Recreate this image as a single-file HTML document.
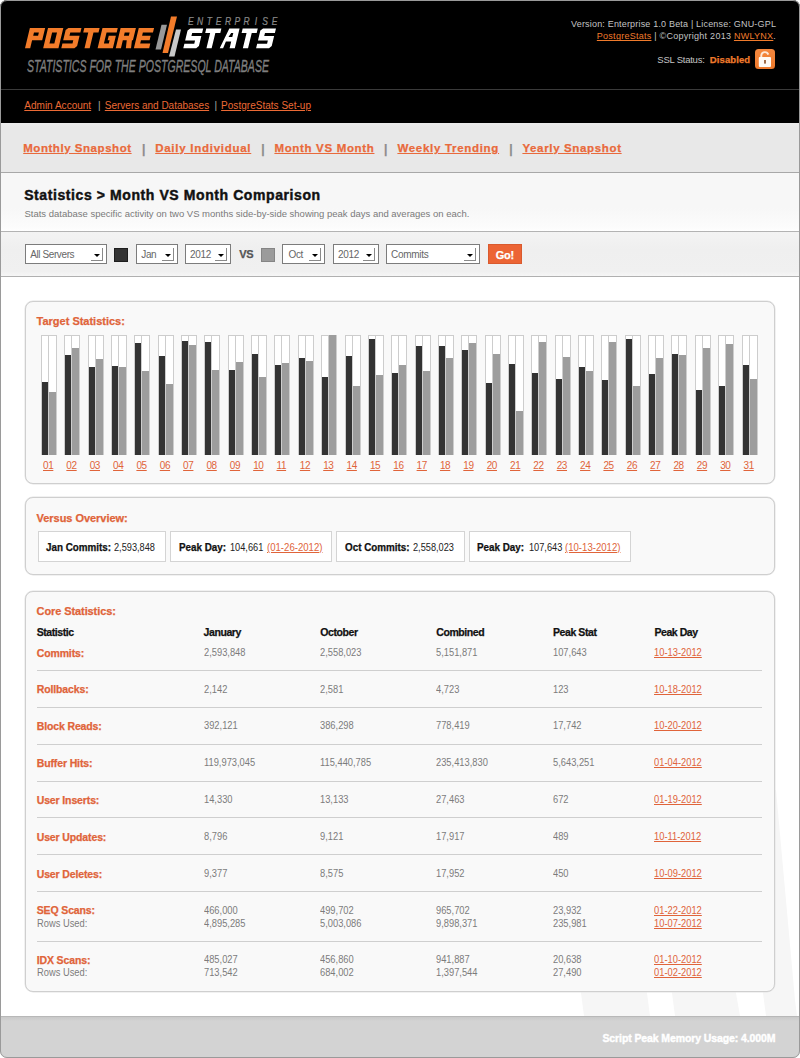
<!DOCTYPE html>
<html><head><meta charset="utf-8">
<style>
html,body{margin:0;padding:0;background:#fff;}
body{width:800px;height:1058px;position:relative;overflow:hidden;font-family:"Liberation Sans",sans-serif;}
#page{position:absolute;left:0;top:0;width:800px;height:1058px;border-radius:7px;overflow:hidden;background:#fff;}
#pb{position:absolute;left:0;top:0;width:800px;height:1058px;box-sizing:border-box;border:1px solid #9a9a9a;border-radius:7px;}
#hdr{position:absolute;left:0;top:0;width:800px;height:89px;background:#000;}
#hline{position:absolute;left:0;top:89px;width:800px;height:1px;background:#3a3a3a;}
#nav{position:absolute;left:0;top:90px;width:800px;height:33px;background:#000;}
#subnav{position:absolute;left:0;top:123px;width:800px;height:49px;background:linear-gradient(#ececec,#e8e8e8 4px);border-bottom:1px solid #a8a8a8;}
#title{position:absolute;left:0;top:173px;width:800px;height:58px;background:linear-gradient(#f7f7f7 60%,#fcfcfc 95%,#fff);border-bottom:1px solid #b3b3b3;}
#filter{position:absolute;left:0;top:232px;width:800px;height:44px;background:linear-gradient(#f3f3f3,#efefef 40%,#f0f0f0 90%,#f6f6f6);border-bottom:1px solid #b0b0b0;}
#footer{position:absolute;left:0;top:1016px;width:800px;height:42px;background:linear-gradient(#c9c9c9,#d3d3d3 4px);border-top:1px solid #b8b8b8;}
a{text-decoration:underline;}
[style*="font-weight:bold"]{-webkit-text-stroke:0.25px currentColor;}
.sel{position:absolute;top:244px;height:20px;box-sizing:border-box;border:1px solid #7c7c7c;background:#fff;}
.sel i{position:absolute;top:3px;right:3px;width:11px;height:12px;border-right:1px solid #8a8a8a;border-bottom:1px solid #8a8a8a;}
.sel i:after{content:"";position:absolute;left:3px;top:6px;border-left:3px solid transparent;border-right:3px solid transparent;border-top:3px solid #000;}
.sq{position:absolute;top:248px;width:14px;height:14px;box-sizing:border-box;}
.panel{position:absolute;left:25px;width:750px;box-sizing:border-box;border:1px solid #cfcfcf;border-radius:8px;background:#f9f9f9;box-shadow:0 0 0 0.5px #e4e4e4;}
.fr{position:absolute;top:335px;height:120px;box-sizing:border-box;border:1px solid #cdcdcd;background:#fff;}
.fd{position:absolute;bottom:603px;width:6px;background:#333;}
.fg{position:absolute;bottom:603px;width:7px;background:#9d9d9d;}
.vbox{position:absolute;top:531px;height:31px;box-sizing:border-box;border:1px solid #d4d4d4;background:#fff;}
.sep{position:absolute;left:37px;width:725px;height:1px;background:#cfcfcf;}
</style></head><body>
<div id="page">
<div id="hdr"></div>
<div id="hline"></div>
<div id="nav"></div>
<div id="subnav"></div>
<div id="title"></div>
<div id="filter"></div>

<!-- logo -->
<svg style="position:absolute;left:0;top:0" width="300" height="88">
<path transform="translate(25.00,48.2) skewX(-13.5)" fill-rule="evenodd" fill="#f37c2a" d="M0,0V-20.3H15.3V-7.8500000000000005H5.2V0Z M5.2,-15.700000000000001V-12.45H10.100000000000001V-15.700000000000001Z"/>
<path transform="translate(43.15,48.2) skewX(-13.5)" fill-rule="evenodd" fill="#f37c2a" d="M0,0V-20.3H15.3V0Z M5.2,-15.700000000000001V-4.6H10.100000000000001V-15.700000000000001Z"/>
<path transform="translate(61.30,48.2) skewX(-13.5)" fill-rule="evenodd" fill="#f37c2a" d="M2.2,-20.3H15.3V-15.700000000000001H5.2V-12.45H15.3V-2.2L13.100000000000001,0H0V-4.6H10.100000000000001V-7.8500000000000005H0V-18.1Z"/>
<path transform="translate(79.45,48.2) skewX(-13.5)" fill-rule="evenodd" fill="#f37c2a" d="M0,-20.3H15.3V-15.700000000000001H10.25V0H5.050000000000001V-15.700000000000001H0Z"/>
<path transform="translate(97.60,48.2) skewX(-13.5)" fill-rule="evenodd" fill="#f37c2a" d="M0,0V-20.3H15.3V-15.700000000000001H5.2V-4.6H10.100000000000001V-7.8500000000000005H8.15V-12.45H15.3V0Z"/>
<path transform="translate(115.75,48.2) skewX(-13.5)" fill-rule="evenodd" fill="#f37c2a" d="M0,0V-20.3H15.3V-7.8500000000000005H14.3L15.3,0H10.100000000000001L9.100000000000001,-7.8500000000000005H5.2V0Z M5.2,-15.700000000000001V-12.45H10.100000000000001V-15.700000000000001Z"/>
<path transform="translate(133.90,48.2) skewX(-13.5)" fill-rule="evenodd" fill="#f37c2a" d="M0,0V-20.3H15.3V-15.700000000000001H5.2V-12.45H13.8V-7.8500000000000005H5.2V-4.6H15.3V0Z"/>
<path transform="translate(183.30,48.3) skewX(-13.5)" fill-rule="evenodd" fill="#ffffff" d="M2.2,-19.9H15.1V-15.399999999999999H5.2V-12.2H15.1V-2.2L12.899999999999999,0H0V-4.5H9.899999999999999V-7.699999999999999H0V-17.7Z"/>
<path transform="translate(201.50,48.3) skewX(-13.5)" fill-rule="evenodd" fill="#ffffff" d="M0,-19.9H15.1V-15.399999999999999H10.15V0H4.949999999999999V-15.399999999999999H0Z"/>
<path transform="translate(219.70,48.3) skewX(-13.5)" fill-rule="evenodd" fill="#ffffff" d="M0,0L4.832,-19.9H15.1V0H9.899999999999999V-6.699999999999999H4.6000000000000005L3.4000000000000004,0Z M6.1000000000000005,-11.2H9.899999999999999V-15.399999999999999H7.800000000000001Z"/>
<path transform="translate(237.90,48.3) skewX(-13.5)" fill-rule="evenodd" fill="#ffffff" d="M0,-19.9H15.1V-15.399999999999999H10.15V0H4.949999999999999V-15.399999999999999H0Z"/>
<path transform="translate(256.10,48.3) skewX(-13.5)" fill-rule="evenodd" fill="#ffffff" d="M2.2,-19.9H15.1V-15.399999999999999H5.2V-12.2H15.1V-2.2L12.899999999999999,0H0V-4.5H9.899999999999999V-7.699999999999999H0V-17.7Z"/>
<polygon points="161.5,24.75 167,24.75 161,49.5 155.5,49.5" fill="#999999"/>
<polygon points="171,16.5 177,16.5 168,53 162.5,53" fill="#f37c2a"/>
<polygon points="176,29.5 181,29.5 174.5,56.5 169,56.5" fill="#c9c9c9"/>
<text transform="scale(0.72,1)" text-anchor="middle" x="265.00 277.92 290.83 303.75 316.67 329.58 342.50 355.42 368.33 381.25" y="25.1" font-family="Liberation Sans" font-style="italic" font-size="11.8" fill="#8a8a8a" stroke="#8a8a8a" stroke-width="0.25">ENTERPRISE</text>
<text x="27" y="72" font-family="Liberation Sans" font-style="italic" font-size="16.5" fill="#7f7f7f" stroke="#7f7f7f" stroke-width="0.35" textLength="242" lengthAdjust="spacingAndGlyphs">STATISTICS FOR THE POSTGRESQL DATABASE</text>
</svg>

<svg style="position:absolute;left:755px;top:49px" width="20" height="20">
<defs><linearGradient id="lg" x1="0" y1="0" x2="0" y2="1"><stop offset="0" stop-color="#f4873e"/><stop offset="1" stop-color="#ee7a2c"/></linearGradient></defs>
<rect x="0" y="0" width="20" height="20" rx="3.5" fill="url(#lg)"/>
<path d="M6.3 8.2 V6.3 A3.6 3.6 0 0 1 13.3 5.6" stroke="#fde7d6" stroke-width="1.9" fill="none"/>
<rect x="3.8" y="8" width="12.2" height="10" rx="1" fill="#fffaf5"/>
<rect x="9.2" y="11" width="1.6" height="3.6" fill="#8a4a20"/>
</svg>

<div id="t1" style="position:absolute;right:23.90px;text-align:right;top:13.58px;font-size:9px;line-height:20px;color:#c4c4c4;font-weight:normal;letter-spacing:0.184px;white-space:nowrap;">Version: Enterprise 1.0 Beta | License: GNU-GPL</div>
<div id="t2" style="position:absolute;right:23.90px;text-align:right;top:26.38px;font-size:9px;line-height:20px;color:#c4c4c4;font-weight:normal;letter-spacing:0.260px;white-space:nowrap;"><a style="color:#f07b2c">PostgreStats</a> | ©Copyright 2013 <a style="color:#f07b2c">NWLYNX</a>.</div>
<div id="t3" style="position:absolute;left:657.30px;top:49.91px;font-size:9.5px;line-height:20px;color:#c4c4c4;font-weight:normal;letter-spacing:-0.228px;white-space:nowrap;">SSL Status:</div>
<div id="t4" style="position:absolute;right:49.80px;text-align:right;top:49.91px;font-size:9.5px;line-height:20px;color:#f07b2c;font-weight:bold;letter-spacing:0.100px;white-space:nowrap;">Disabled</div>
<div id="t5" style="position:absolute;left:24.30px;top:95.73px;font-size:10px;line-height:20px;color:#777;font-weight:normal;letter-spacing:0.011px;white-space:nowrap;"><a style="color:#ec6a35">Admin Account</a></div>
<div id="t6" style="position:absolute;left:98.00px;top:95.73px;font-size:10px;line-height:20px;color:#aaa;font-weight:normal;white-space:nowrap;">|</div>
<div id="t7" style="position:absolute;left:104.80px;top:95.73px;font-size:10px;line-height:20px;color:#777;font-weight:normal;letter-spacing:-0.008px;white-space:nowrap;"><a style="color:#ec6a35">Servers and Databases</a></div>
<div id="t8" style="position:absolute;left:214.50px;top:95.73px;font-size:10px;line-height:20px;color:#aaa;font-weight:normal;white-space:nowrap;">|</div>
<div id="t9" style="position:absolute;left:221.10px;top:95.73px;font-size:10px;line-height:20px;color:#777;font-weight:normal;letter-spacing:0.023px;white-space:nowrap;"><a style="color:#ec6a35">PostgreStats Set-up</a></div>
<div id="t10" style="position:absolute;left:23.20px;top:138.02px;font-size:11.5px;line-height:20px;color:#777;font-weight:bold;letter-spacing:0.547px;white-space:nowrap;"><a style="color:#e96a3c">Monthly Snapshot</a></div>
<div id="t11" style="position:absolute;left:155.20px;top:138.02px;font-size:11.5px;line-height:20px;color:#777;font-weight:bold;letter-spacing:0.732px;white-space:nowrap;"><a style="color:#e96a3c">Daily Individual</a></div>
<div id="t12" style="position:absolute;left:274.40px;top:138.02px;font-size:11.5px;line-height:20px;color:#777;font-weight:bold;letter-spacing:0.670px;white-space:nowrap;"><a style="color:#e96a3c">Month VS Month</a></div>
<div id="t13" style="position:absolute;left:397.40px;top:138.02px;font-size:11.5px;line-height:20px;color:#777;font-weight:bold;letter-spacing:0.700px;white-space:nowrap;"><a style="color:#e96a3c">Weekly Trending</a></div>
<div id="t14" style="position:absolute;left:522.40px;top:138.02px;font-size:11.5px;line-height:20px;color:#777;font-weight:bold;letter-spacing:0.651px;white-space:nowrap;"><a style="color:#e96a3c">Yearly Snapshot</a></div>
<div id="t15" style="position:absolute;left:142.10px;top:139.04px;font-size:12px;line-height:20px;color:#8c8c8c;font-weight:bold;white-space:nowrap;">|</div>
<div id="t16" style="position:absolute;left:261.30px;top:139.04px;font-size:12px;line-height:20px;color:#8c8c8c;font-weight:bold;white-space:nowrap;">|</div>
<div id="t17" style="position:absolute;left:384.10px;top:139.04px;font-size:12px;line-height:20px;color:#8c8c8c;font-weight:bold;white-space:nowrap;">|</div>
<div id="t18" style="position:absolute;left:509.30px;top:139.04px;font-size:12px;line-height:20px;color:#8c8c8c;font-weight:bold;white-space:nowrap;">|</div>
<div id="t19" style="position:absolute;left:24.20px;top:185.05px;font-size:14px;line-height:20px;color:#111;font-weight:bold;letter-spacing:0.587px;white-space:nowrap;-webkit-text-stroke:0.45px #111;">Statistics &gt; Month VS Month Comparison</div>
<div id="t20" style="position:absolute;left:24.50px;top:204.01px;font-size:9.5px;line-height:20px;color:#7a7a7a;font-weight:normal;letter-spacing:-0.008px;white-space:nowrap;">Stats database specific activity on two VS months side-by-side showing peak days and averages on each.</div>
<div class="sel" style="left:25px;width:82px"><i></i></div><div id="t21" style="position:absolute;left:30.20px;top:245.14px;font-size:10px;line-height:20px;color:#666;font-weight:normal;letter-spacing:-0.396px;white-space:nowrap;">All Servers</div>
<div class="sq" style="left:114px;background:#333;border:1px solid #1e1e1e"></div>
<div class="sel" style="left:136px;width:42px"><i></i></div><div id="t22" style="position:absolute;left:141.30px;top:245.14px;font-size:10px;line-height:20px;color:#666;font-weight:normal;letter-spacing:-0.396px;white-space:nowrap;">Jan</div>
<div class="sel" style="left:185px;width:46px"><i></i></div><div id="t23" style="position:absolute;left:190.00px;top:245.14px;font-size:10px;line-height:20px;color:#666;font-weight:normal;letter-spacing:-0.300px;white-space:nowrap;">2012</div>
<div id="t24" style="position:absolute;left:239.20px;top:244.39px;font-size:11px;line-height:20px;color:#555;font-weight:bold;letter-spacing:-0.200px;white-space:nowrap;">VS</div>
<div class="sq" style="left:261px;background:#9b9b9b;border:1px solid #858585"></div>
<div class="sel" style="left:282px;width:43px"><i></i></div><div id="t25" style="position:absolute;left:288.50px;top:245.14px;font-size:10px;line-height:20px;color:#666;font-weight:normal;letter-spacing:-0.396px;white-space:nowrap;">Oct</div>
<div class="sel" style="left:333px;width:46px"><i></i></div><div id="t26" style="position:absolute;left:338.00px;top:245.14px;font-size:10px;line-height:20px;color:#666;font-weight:normal;letter-spacing:-0.300px;white-space:nowrap;">2012</div>
<div class="sel" style="left:386px;width:94px"><i></i></div><div id="t27" style="position:absolute;left:391.00px;top:245.14px;font-size:10px;line-height:20px;color:#666;font-weight:normal;letter-spacing:-0.300px;white-space:nowrap;">Commits</div>
<div style="position:absolute;left:488px;top:244px;width:34px;height:20px;box-sizing:border-box;border:1px solid #d95a2e;background:#ec6434"></div>
<div id="t28" style="position:absolute;left:495.80px;top:245.19px;font-size:11px;line-height:20px;color:#fff;font-weight:bold;letter-spacing:-0.300px;white-space:nowrap;">Go!</div>
<svg style="position:absolute;left:0;top:0" width="800" height="1058">
<polygon points="578,970 644,970 650,1016 584,1016" fill="#f6f6f6"/>
<polygon points="669,970 732,970 740,1016 675,1016" fill="#f6f6f6"/>
<polygon points="735,780 776,790 795,1000 797,1016 766,1016" fill="#f6f6f6"/>
</svg>
<div class="panel" style="top:301px;height:183px"></div>
<div id="t29" style="position:absolute;left:36.60px;top:310.69px;font-size:11px;line-height:20px;color:#e0643a;font-weight:bold;letter-spacing:-0.010px;white-space:nowrap;">Target Statistics:</div>
<div class="fr" style="left:41px;width:8px"></div><div class="fr" style="left:48px;width:9px"></div><div class="fd" style="left:42px;height:73px"></div><div class="fg" style="left:49px;height:63px"></div>
<div id="t30" style="position:absolute;left:43.00px;top:455.54px;font-size:10px;line-height:20px;color:#777;font-weight:normal;letter-spacing:-0.400px;white-space:nowrap;"><a style="color:#e0643a">01</a></div>
<div class="fr" style="left:64px;width:8px"></div><div class="fr" style="left:71px;width:9px"></div><div class="fd" style="left:65px;height:100px"></div><div class="fg" style="left:72px;height:107px"></div>
<div id="t31" style="position:absolute;left:66.35px;top:455.54px;font-size:10px;line-height:20px;color:#777;font-weight:normal;letter-spacing:-0.400px;white-space:nowrap;"><a style="color:#e0643a">02</a></div>
<div class="fr" style="left:88px;width:8px"></div><div class="fr" style="left:95px;width:9px"></div><div class="fd" style="left:89px;height:88px"></div><div class="fg" style="left:96px;height:96px"></div>
<div id="t32" style="position:absolute;left:89.70px;top:455.54px;font-size:10px;line-height:20px;color:#777;font-weight:normal;letter-spacing:-0.400px;white-space:nowrap;"><a style="color:#e0643a">03</a></div>
<div class="fr" style="left:111px;width:8px"></div><div class="fr" style="left:118px;width:9px"></div><div class="fd" style="left:112px;height:89px"></div><div class="fg" style="left:119px;height:88px"></div>
<div id="t33" style="position:absolute;left:113.05px;top:455.54px;font-size:10px;line-height:20px;color:#777;font-weight:normal;letter-spacing:-0.400px;white-space:nowrap;"><a style="color:#e0643a">04</a></div>
<div class="fr" style="left:134px;width:8px"></div><div class="fr" style="left:141px;width:9px"></div><div class="fd" style="left:135px;height:112px"></div><div class="fg" style="left:142px;height:84px"></div>
<div id="t34" style="position:absolute;left:136.40px;top:455.54px;font-size:10px;line-height:20px;color:#777;font-weight:normal;letter-spacing:-0.400px;white-space:nowrap;"><a style="color:#e0643a">05</a></div>
<div class="fr" style="left:158px;width:8px"></div><div class="fr" style="left:165px;width:9px"></div><div class="fd" style="left:159px;height:99px"></div><div class="fg" style="left:166px;height:71px"></div>
<div id="t35" style="position:absolute;left:159.75px;top:455.54px;font-size:10px;line-height:20px;color:#777;font-weight:normal;letter-spacing:-0.400px;white-space:nowrap;"><a style="color:#e0643a">06</a></div>
<div class="fr" style="left:181px;width:8px"></div><div class="fr" style="left:188px;width:9px"></div><div class="fd" style="left:182px;height:114px"></div><div class="fg" style="left:189px;height:110px"></div>
<div id="t36" style="position:absolute;left:183.10px;top:455.54px;font-size:10px;line-height:20px;color:#777;font-weight:normal;letter-spacing:-0.400px;white-space:nowrap;"><a style="color:#e0643a">07</a></div>
<div class="fr" style="left:204px;width:8px"></div><div class="fr" style="left:211px;width:9px"></div><div class="fd" style="left:205px;height:113px"></div><div class="fg" style="left:212px;height:85px"></div>
<div id="t37" style="position:absolute;left:206.45px;top:455.54px;font-size:10px;line-height:20px;color:#777;font-weight:normal;letter-spacing:-0.400px;white-space:nowrap;"><a style="color:#e0643a">08</a></div>
<div class="fr" style="left:228px;width:8px"></div><div class="fr" style="left:235px;width:9px"></div><div class="fd" style="left:229px;height:85px"></div><div class="fg" style="left:236px;height:93px"></div>
<div id="t38" style="position:absolute;left:229.80px;top:455.54px;font-size:10px;line-height:20px;color:#777;font-weight:normal;letter-spacing:-0.400px;white-space:nowrap;"><a style="color:#e0643a">09</a></div>
<div class="fr" style="left:251px;width:8px"></div><div class="fr" style="left:258px;width:9px"></div><div class="fd" style="left:252px;height:101px"></div><div class="fg" style="left:259px;height:78px"></div>
<div id="t39" style="position:absolute;left:253.15px;top:455.54px;font-size:10px;line-height:20px;color:#777;font-weight:normal;letter-spacing:-0.400px;white-space:nowrap;"><a style="color:#e0643a">10</a></div>
<div class="fr" style="left:274px;width:8px"></div><div class="fr" style="left:281px;width:9px"></div><div class="fd" style="left:275px;height:90px"></div><div class="fg" style="left:282px;height:92px"></div>
<div id="t40" style="position:absolute;left:276.50px;top:455.54px;font-size:10px;line-height:20px;color:#777;font-weight:normal;letter-spacing:-0.400px;white-space:nowrap;"><a style="color:#e0643a">11</a></div>
<div class="fr" style="left:298px;width:8px"></div><div class="fr" style="left:305px;width:9px"></div><div class="fd" style="left:299px;height:97px"></div><div class="fg" style="left:306px;height:94px"></div>
<div id="t41" style="position:absolute;left:299.85px;top:455.54px;font-size:10px;line-height:20px;color:#777;font-weight:normal;letter-spacing:-0.400px;white-space:nowrap;"><a style="color:#e0643a">12</a></div>
<div class="fr" style="left:321px;width:8px"></div><div class="fr" style="left:328px;width:9px"></div><div class="fd" style="left:322px;height:78px"></div><div class="fg" style="left:329px;height:120px"></div>
<div id="t42" style="position:absolute;left:323.20px;top:455.54px;font-size:10px;line-height:20px;color:#777;font-weight:normal;letter-spacing:-0.400px;white-space:nowrap;"><a style="color:#e0643a">13</a></div>
<div class="fr" style="left:345px;width:8px"></div><div class="fr" style="left:352px;width:9px"></div><div class="fd" style="left:346px;height:99px"></div><div class="fg" style="left:353px;height:69px"></div>
<div id="t43" style="position:absolute;left:346.55px;top:455.54px;font-size:10px;line-height:20px;color:#777;font-weight:normal;letter-spacing:-0.400px;white-space:nowrap;"><a style="color:#e0643a">14</a></div>
<div class="fr" style="left:368px;width:8px"></div><div class="fr" style="left:375px;width:9px"></div><div class="fd" style="left:369px;height:116px"></div><div class="fg" style="left:376px;height:80px"></div>
<div id="t44" style="position:absolute;left:369.90px;top:455.54px;font-size:10px;line-height:20px;color:#777;font-weight:normal;letter-spacing:-0.400px;white-space:nowrap;"><a style="color:#e0643a">15</a></div>
<div class="fr" style="left:391px;width:8px"></div><div class="fr" style="left:398px;width:9px"></div><div class="fd" style="left:392px;height:82px"></div><div class="fg" style="left:399px;height:90px"></div>
<div id="t45" style="position:absolute;left:393.25px;top:455.54px;font-size:10px;line-height:20px;color:#777;font-weight:normal;letter-spacing:-0.400px;white-space:nowrap;"><a style="color:#e0643a">16</a></div>
<div class="fr" style="left:415px;width:8px"></div><div class="fr" style="left:422px;width:9px"></div><div class="fd" style="left:416px;height:109px"></div><div class="fg" style="left:423px;height:84px"></div>
<div id="t46" style="position:absolute;left:416.60px;top:455.54px;font-size:10px;line-height:20px;color:#777;font-weight:normal;letter-spacing:-0.400px;white-space:nowrap;"><a style="color:#e0643a">17</a></div>
<div class="fr" style="left:438px;width:8px"></div><div class="fr" style="left:445px;width:9px"></div><div class="fd" style="left:439px;height:109px"></div><div class="fg" style="left:446px;height:97px"></div>
<div id="t47" style="position:absolute;left:439.95px;top:455.54px;font-size:10px;line-height:20px;color:#777;font-weight:normal;letter-spacing:-0.400px;white-space:nowrap;"><a style="color:#e0643a">18</a></div>
<div class="fr" style="left:461px;width:8px"></div><div class="fr" style="left:468px;width:9px"></div><div class="fd" style="left:462px;height:105px"></div><div class="fg" style="left:469px;height:112px"></div>
<div id="t48" style="position:absolute;left:463.30px;top:455.54px;font-size:10px;line-height:20px;color:#777;font-weight:normal;letter-spacing:-0.400px;white-space:nowrap;"><a style="color:#e0643a">19</a></div>
<div class="fr" style="left:485px;width:8px"></div><div class="fr" style="left:492px;width:9px"></div><div class="fd" style="left:486px;height:72px"></div><div class="fg" style="left:493px;height:101px"></div>
<div id="t49" style="position:absolute;left:486.65px;top:455.54px;font-size:10px;line-height:20px;color:#777;font-weight:normal;letter-spacing:-0.400px;white-space:nowrap;"><a style="color:#e0643a">20</a></div>
<div class="fr" style="left:508px;width:8px"></div><div class="fr" style="left:515px;width:9px"></div><div class="fd" style="left:509px;height:91px"></div><div class="fg" style="left:516px;height:44px"></div>
<div id="t50" style="position:absolute;left:510.00px;top:455.54px;font-size:10px;line-height:20px;color:#777;font-weight:normal;letter-spacing:-0.400px;white-space:nowrap;"><a style="color:#e0643a">21</a></div>
<div class="fr" style="left:531px;width:8px"></div><div class="fr" style="left:538px;width:9px"></div><div class="fd" style="left:532px;height:82px"></div><div class="fg" style="left:539px;height:113px"></div>
<div id="t51" style="position:absolute;left:533.35px;top:455.54px;font-size:10px;line-height:20px;color:#777;font-weight:normal;letter-spacing:-0.400px;white-space:nowrap;"><a style="color:#e0643a">22</a></div>
<div class="fr" style="left:555px;width:8px"></div><div class="fr" style="left:562px;width:9px"></div><div class="fd" style="left:556px;height:76px"></div><div class="fg" style="left:563px;height:98px"></div>
<div id="t52" style="position:absolute;left:556.70px;top:455.54px;font-size:10px;line-height:20px;color:#777;font-weight:normal;letter-spacing:-0.400px;white-space:nowrap;"><a style="color:#e0643a">23</a></div>
<div class="fr" style="left:578px;width:8px"></div><div class="fr" style="left:585px;width:9px"></div><div class="fd" style="left:579px;height:88px"></div><div class="fg" style="left:586px;height:84px"></div>
<div id="t53" style="position:absolute;left:580.05px;top:455.54px;font-size:10px;line-height:20px;color:#777;font-weight:normal;letter-spacing:-0.400px;white-space:nowrap;"><a style="color:#e0643a">24</a></div>
<div class="fr" style="left:601px;width:8px"></div><div class="fr" style="left:608px;width:9px"></div><div class="fd" style="left:602px;height:75px"></div><div class="fg" style="left:609px;height:113px"></div>
<div id="t54" style="position:absolute;left:603.40px;top:455.54px;font-size:10px;line-height:20px;color:#777;font-weight:normal;letter-spacing:-0.400px;white-space:nowrap;"><a style="color:#e0643a">25</a></div>
<div class="fr" style="left:625px;width:8px"></div><div class="fr" style="left:632px;width:9px"></div><div class="fd" style="left:626px;height:116px"></div><div class="fg" style="left:633px;height:69px"></div>
<div id="t55" style="position:absolute;left:626.75px;top:455.54px;font-size:10px;line-height:20px;color:#777;font-weight:normal;letter-spacing:-0.400px;white-space:nowrap;"><a style="color:#e0643a">26</a></div>
<div class="fr" style="left:648px;width:8px"></div><div class="fr" style="left:655px;width:9px"></div><div class="fd" style="left:649px;height:81px"></div><div class="fg" style="left:656px;height:97px"></div>
<div id="t56" style="position:absolute;left:650.10px;top:455.54px;font-size:10px;line-height:20px;color:#777;font-weight:normal;letter-spacing:-0.400px;white-space:nowrap;"><a style="color:#e0643a">27</a></div>
<div class="fr" style="left:671px;width:8px"></div><div class="fr" style="left:678px;width:9px"></div><div class="fd" style="left:672px;height:101px"></div><div class="fg" style="left:679px;height:100px"></div>
<div id="t57" style="position:absolute;left:673.45px;top:455.54px;font-size:10px;line-height:20px;color:#777;font-weight:normal;letter-spacing:-0.400px;white-space:nowrap;"><a style="color:#e0643a">28</a></div>
<div class="fr" style="left:695px;width:8px"></div><div class="fr" style="left:702px;width:9px"></div><div class="fd" style="left:696px;height:65px"></div><div class="fg" style="left:703px;height:107px"></div>
<div id="t58" style="position:absolute;left:696.80px;top:455.54px;font-size:10px;line-height:20px;color:#777;font-weight:normal;letter-spacing:-0.400px;white-space:nowrap;"><a style="color:#e0643a">29</a></div>
<div class="fr" style="left:718px;width:8px"></div><div class="fr" style="left:725px;width:9px"></div><div class="fd" style="left:719px;height:69px"></div><div class="fg" style="left:726px;height:111px"></div>
<div id="t59" style="position:absolute;left:720.15px;top:455.54px;font-size:10px;line-height:20px;color:#777;font-weight:normal;letter-spacing:-0.400px;white-space:nowrap;"><a style="color:#e0643a">30</a></div>
<div class="fr" style="left:742px;width:8px"></div><div class="fr" style="left:749px;width:9px"></div><div class="fd" style="left:743px;height:90px"></div><div class="fg" style="left:750px;height:76px"></div>
<div id="t60" style="position:absolute;left:743.50px;top:455.54px;font-size:10px;line-height:20px;color:#777;font-weight:normal;letter-spacing:-0.400px;white-space:nowrap;"><a style="color:#e0643a">31</a></div>
<div class="panel" style="top:497px;height:78px"></div>
<div id="t61" style="position:absolute;left:36.60px;top:508.19px;font-size:11px;line-height:20px;color:#e0643a;font-weight:bold;letter-spacing:-0.042px;white-space:nowrap;">Versus Overview:</div>
<div class="vbox" style="left:38px;width:128px"></div>
<div class="vbox" style="left:170px;width:162px"></div>
<div class="vbox" style="left:336px;width:129px"></div>
<div class="vbox" style="left:469px;width:162px"></div>
<div id="t62" style="position:absolute;left:45.50px;top:537.16px;font-size:10.5px;line-height:20px;color:#111;font-weight:bold;transform:scaleX(0.9373);transform-origin:0 0;white-space:nowrap;">Jan Commits:</div>
<div id="t63" style="position:absolute;left:114.20px;top:536.99px;font-size:11px;line-height:20px;color:#222;font-weight:normal;transform:scaleX(0.8376);transform-origin:0 0;white-space:nowrap;">2,593,848</div>
<div id="t64" style="position:absolute;left:345.10px;top:537.16px;font-size:10.5px;line-height:20px;color:#111;font-weight:bold;transform:scaleX(0.9373);transform-origin:0 0;white-space:nowrap;">Oct Commits:</div>
<div id="t65" style="position:absolute;left:412.50px;top:536.99px;font-size:11px;line-height:20px;color:#222;font-weight:normal;transform:scaleX(0.8376);transform-origin:0 0;white-space:nowrap;">2,558,023</div>
<div id="t66" style="position:absolute;left:178.50px;top:537.16px;font-size:10.5px;line-height:20px;color:#111;font-weight:bold;transform:scaleX(0.9373);transform-origin:0 0;white-space:nowrap;">Peak Day:</div>
<div id="t67" style="position:absolute;left:230.20px;top:536.99px;font-size:11px;line-height:20px;color:#222;font-weight:normal;transform:scaleX(0.8376);transform-origin:0 0;white-space:nowrap;">104,661</div>
<div id="t68" style="position:absolute;left:267.40px;top:536.99px;font-size:11px;line-height:20px;color:#777;font-weight:normal;transform:scaleX(0.8721);transform-origin:0 0;white-space:nowrap;"><a style="color:#e0643a">(01-26-2012)</a></div>
<div id="t69" style="position:absolute;left:477.20px;top:537.16px;font-size:10.5px;line-height:20px;color:#111;font-weight:bold;transform:scaleX(0.9373);transform-origin:0 0;white-space:nowrap;">Peak Day:</div>
<div id="t70" style="position:absolute;left:528.60px;top:536.99px;font-size:11px;line-height:20px;color:#222;font-weight:normal;transform:scaleX(0.8376);transform-origin:0 0;white-space:nowrap;">107,643</div>
<div id="t71" style="position:absolute;left:565.40px;top:536.99px;font-size:11px;line-height:20px;color:#777;font-weight:normal;transform:scaleX(0.8721);transform-origin:0 0;white-space:nowrap;"><a style="color:#e0643a">(10-13-2012)</a></div>
<div class="panel" style="top:591px;height:401px"></div>
<div id="t72" style="position:absolute;left:36.60px;top:601.19px;font-size:11px;line-height:20px;color:#e0643a;font-weight:bold;letter-spacing:-0.096px;white-space:nowrap;">Core Statistics:</div>
<div id="t73" style="position:absolute;left:36.70px;top:622.06px;font-size:10.5px;line-height:20px;color:#111;font-weight:bold;letter-spacing:-0.425px;white-space:nowrap;">Statistic</div>
<div id="t74" style="position:absolute;left:203.60px;top:622.06px;font-size:10.5px;line-height:20px;color:#111;font-weight:bold;letter-spacing:-0.425px;white-space:nowrap;">January</div>
<div id="t75" style="position:absolute;left:320.30px;top:622.06px;font-size:10.5px;line-height:20px;color:#111;font-weight:bold;letter-spacing:-0.425px;white-space:nowrap;">October</div>
<div id="t76" style="position:absolute;left:436.30px;top:622.06px;font-size:10.5px;line-height:20px;color:#111;font-weight:bold;letter-spacing:-0.425px;white-space:nowrap;">Combined</div>
<div id="t77" style="position:absolute;left:553.00px;top:622.06px;font-size:10.5px;line-height:20px;color:#111;font-weight:bold;letter-spacing:-0.425px;white-space:nowrap;">Peak Stat</div>
<div id="t78" style="position:absolute;left:654.40px;top:622.06px;font-size:10.5px;line-height:20px;color:#111;font-weight:bold;letter-spacing:-0.425px;white-space:nowrap;">Peak Day</div>
<div id="t79" style="position:absolute;left:36.70px;top:642.56px;font-size:10.5px;line-height:20px;color:#e0643a;font-weight:bold;letter-spacing:-0.126px;white-space:nowrap;">Commits:</div>
<div id="t80" style="position:absolute;left:203.60px;top:642.74px;font-size:10px;line-height:20px;color:#7c7c7c;font-weight:normal;transform:scaleX(0.9321);transform-origin:0 0;white-space:nowrap;">2,593,848</div>
<div id="t81" style="position:absolute;left:320.30px;top:642.74px;font-size:10px;line-height:20px;color:#7c7c7c;font-weight:normal;transform:scaleX(0.9321);transform-origin:0 0;white-space:nowrap;">2,558,023</div>
<div id="t82" style="position:absolute;left:436.30px;top:642.74px;font-size:10px;line-height:20px;color:#7c7c7c;font-weight:normal;transform:scaleX(0.9321);transform-origin:0 0;white-space:nowrap;">5,151,871</div>
<div id="t83" style="position:absolute;left:553.00px;top:642.74px;font-size:10px;line-height:20px;color:#7c7c7c;font-weight:normal;transform:scaleX(0.9321);transform-origin:0 0;white-space:nowrap;">107,643</div>
<div id="t84" style="position:absolute;left:654.40px;top:642.74px;font-size:10px;line-height:20px;color:#777;font-weight:normal;transform:scaleX(0.9345);transform-origin:0 0;white-space:nowrap;"><a style="color:#e0643a">10-13-2012</a></div>
<div class="sep" style="top:670px"></div>
<div id="t85" style="position:absolute;left:36.70px;top:679.41px;font-size:10.5px;line-height:20px;color:#e0643a;font-weight:bold;letter-spacing:-0.126px;white-space:nowrap;">Rollbacks:</div>
<div id="t86" style="position:absolute;left:203.60px;top:679.59px;font-size:10px;line-height:20px;color:#7c7c7c;font-weight:normal;transform:scaleX(0.9321);transform-origin:0 0;white-space:nowrap;">2,142</div>
<div id="t87" style="position:absolute;left:320.30px;top:679.59px;font-size:10px;line-height:20px;color:#7c7c7c;font-weight:normal;transform:scaleX(0.9321);transform-origin:0 0;white-space:nowrap;">2,581</div>
<div id="t88" style="position:absolute;left:436.30px;top:679.59px;font-size:10px;line-height:20px;color:#7c7c7c;font-weight:normal;transform:scaleX(0.9321);transform-origin:0 0;white-space:nowrap;">4,723</div>
<div id="t89" style="position:absolute;left:553.00px;top:679.59px;font-size:10px;line-height:20px;color:#7c7c7c;font-weight:normal;transform:scaleX(0.9321);transform-origin:0 0;white-space:nowrap;">123</div>
<div id="t90" style="position:absolute;left:654.40px;top:679.59px;font-size:10px;line-height:20px;color:#777;font-weight:normal;transform:scaleX(0.9345);transform-origin:0 0;white-space:nowrap;"><a style="color:#e0643a">10-18-2012</a></div>
<div class="sep" style="top:707px"></div>
<div id="t91" style="position:absolute;left:36.70px;top:716.26px;font-size:10.5px;line-height:20px;color:#e0643a;font-weight:bold;letter-spacing:-0.126px;white-space:nowrap;">Block Reads:</div>
<div id="t92" style="position:absolute;left:203.60px;top:716.44px;font-size:10px;line-height:20px;color:#7c7c7c;font-weight:normal;transform:scaleX(0.9321);transform-origin:0 0;white-space:nowrap;">392,121</div>
<div id="t93" style="position:absolute;left:320.30px;top:716.44px;font-size:10px;line-height:20px;color:#7c7c7c;font-weight:normal;transform:scaleX(0.9321);transform-origin:0 0;white-space:nowrap;">386,298</div>
<div id="t94" style="position:absolute;left:436.30px;top:716.44px;font-size:10px;line-height:20px;color:#7c7c7c;font-weight:normal;transform:scaleX(0.9321);transform-origin:0 0;white-space:nowrap;">778,419</div>
<div id="t95" style="position:absolute;left:553.00px;top:716.44px;font-size:10px;line-height:20px;color:#7c7c7c;font-weight:normal;transform:scaleX(0.9321);transform-origin:0 0;white-space:nowrap;">17,742</div>
<div id="t96" style="position:absolute;left:654.40px;top:716.44px;font-size:10px;line-height:20px;color:#777;font-weight:normal;transform:scaleX(0.9345);transform-origin:0 0;white-space:nowrap;"><a style="color:#e0643a">10-20-2012</a></div>
<div class="sep" style="top:744px"></div>
<div id="t97" style="position:absolute;left:36.70px;top:753.11px;font-size:10.5px;line-height:20px;color:#e0643a;font-weight:bold;letter-spacing:-0.126px;white-space:nowrap;">Buffer Hits:</div>
<div id="t98" style="position:absolute;left:203.60px;top:753.28px;font-size:10px;line-height:20px;color:#7c7c7c;font-weight:normal;transform:scaleX(0.9321);transform-origin:0 0;white-space:nowrap;">119,973,045</div>
<div id="t99" style="position:absolute;left:320.30px;top:753.28px;font-size:10px;line-height:20px;color:#7c7c7c;font-weight:normal;transform:scaleX(0.9321);transform-origin:0 0;white-space:nowrap;">115,440,785</div>
<div id="t100" style="position:absolute;left:436.30px;top:753.28px;font-size:10px;line-height:20px;color:#7c7c7c;font-weight:normal;transform:scaleX(0.9321);transform-origin:0 0;white-space:nowrap;">235,413,830</div>
<div id="t101" style="position:absolute;left:553.00px;top:753.28px;font-size:10px;line-height:20px;color:#7c7c7c;font-weight:normal;transform:scaleX(0.9321);transform-origin:0 0;white-space:nowrap;">5,643,251</div>
<div id="t102" style="position:absolute;left:654.40px;top:753.28px;font-size:10px;line-height:20px;color:#777;font-weight:normal;transform:scaleX(0.9345);transform-origin:0 0;white-space:nowrap;"><a style="color:#e0643a">01-04-2012</a></div>
<div class="sep" style="top:781px"></div>
<div id="t103" style="position:absolute;left:36.70px;top:789.96px;font-size:10.5px;line-height:20px;color:#e0643a;font-weight:bold;letter-spacing:-0.126px;white-space:nowrap;">User Inserts:</div>
<div id="t104" style="position:absolute;left:203.60px;top:790.13px;font-size:10px;line-height:20px;color:#7c7c7c;font-weight:normal;transform:scaleX(0.9321);transform-origin:0 0;white-space:nowrap;">14,330</div>
<div id="t105" style="position:absolute;left:320.30px;top:790.13px;font-size:10px;line-height:20px;color:#7c7c7c;font-weight:normal;transform:scaleX(0.9321);transform-origin:0 0;white-space:nowrap;">13,133</div>
<div id="t106" style="position:absolute;left:436.30px;top:790.13px;font-size:10px;line-height:20px;color:#7c7c7c;font-weight:normal;transform:scaleX(0.9321);transform-origin:0 0;white-space:nowrap;">27,463</div>
<div id="t107" style="position:absolute;left:553.00px;top:790.13px;font-size:10px;line-height:20px;color:#7c7c7c;font-weight:normal;transform:scaleX(0.9321);transform-origin:0 0;white-space:nowrap;">672</div>
<div id="t108" style="position:absolute;left:654.40px;top:790.13px;font-size:10px;line-height:20px;color:#777;font-weight:normal;transform:scaleX(0.9345);transform-origin:0 0;white-space:nowrap;"><a style="color:#e0643a">01-19-2012</a></div>
<div class="sep" style="top:817px"></div>
<div id="t109" style="position:absolute;left:36.70px;top:826.81px;font-size:10.5px;line-height:20px;color:#e0643a;font-weight:bold;letter-spacing:-0.126px;white-space:nowrap;">User Updates:</div>
<div id="t110" style="position:absolute;left:203.60px;top:826.99px;font-size:10px;line-height:20px;color:#7c7c7c;font-weight:normal;transform:scaleX(0.9321);transform-origin:0 0;white-space:nowrap;">8,796</div>
<div id="t111" style="position:absolute;left:320.30px;top:826.99px;font-size:10px;line-height:20px;color:#7c7c7c;font-weight:normal;transform:scaleX(0.9321);transform-origin:0 0;white-space:nowrap;">9,121</div>
<div id="t112" style="position:absolute;left:436.30px;top:826.99px;font-size:10px;line-height:20px;color:#7c7c7c;font-weight:normal;transform:scaleX(0.9321);transform-origin:0 0;white-space:nowrap;">17,917</div>
<div id="t113" style="position:absolute;left:553.00px;top:826.99px;font-size:10px;line-height:20px;color:#7c7c7c;font-weight:normal;transform:scaleX(0.9321);transform-origin:0 0;white-space:nowrap;">489</div>
<div id="t114" style="position:absolute;left:654.40px;top:826.99px;font-size:10px;line-height:20px;color:#777;font-weight:normal;transform:scaleX(0.9345);transform-origin:0 0;white-space:nowrap;"><a style="color:#e0643a">10-11-2012</a></div>
<div class="sep" style="top:854px"></div>
<div id="t115" style="position:absolute;left:36.70px;top:863.66px;font-size:10.5px;line-height:20px;color:#e0643a;font-weight:bold;letter-spacing:-0.126px;white-space:nowrap;">User Deletes:</div>
<div id="t116" style="position:absolute;left:203.60px;top:863.84px;font-size:10px;line-height:20px;color:#7c7c7c;font-weight:normal;transform:scaleX(0.9321);transform-origin:0 0;white-space:nowrap;">9,377</div>
<div id="t117" style="position:absolute;left:320.30px;top:863.84px;font-size:10px;line-height:20px;color:#7c7c7c;font-weight:normal;transform:scaleX(0.9321);transform-origin:0 0;white-space:nowrap;">8,575</div>
<div id="t118" style="position:absolute;left:436.30px;top:863.84px;font-size:10px;line-height:20px;color:#7c7c7c;font-weight:normal;transform:scaleX(0.9321);transform-origin:0 0;white-space:nowrap;">17,952</div>
<div id="t119" style="position:absolute;left:553.00px;top:863.84px;font-size:10px;line-height:20px;color:#7c7c7c;font-weight:normal;transform:scaleX(0.9321);transform-origin:0 0;white-space:nowrap;">450</div>
<div id="t120" style="position:absolute;left:654.40px;top:863.84px;font-size:10px;line-height:20px;color:#777;font-weight:normal;transform:scaleX(0.9345);transform-origin:0 0;white-space:nowrap;"><a style="color:#e0643a">10-09-2012</a></div>
<div class="sep" style="top:891px"></div>
<div class="sep" style="top:941px"></div>
<div id="t121" style="position:absolute;left:36.70px;top:900.36px;font-size:10.5px;line-height:20px;color:#e0643a;font-weight:bold;letter-spacing:-0.126px;white-space:nowrap;">SEQ Scans:</div>
<div id="t122" style="position:absolute;left:36.70px;top:913.83px;font-size:10px;line-height:20px;color:#7c7c7c;font-weight:normal;transform:scaleX(0.9321);transform-origin:0 0;white-space:nowrap;">Rows Used:</div>
<div id="t123" style="position:absolute;left:203.60px;top:900.53px;font-size:10px;line-height:20px;color:#7c7c7c;font-weight:normal;transform:scaleX(0.9321);transform-origin:0 0;white-space:nowrap;">466,000</div>
<div id="t124" style="position:absolute;left:203.60px;top:913.83px;font-size:10px;line-height:20px;color:#7c7c7c;font-weight:normal;transform:scaleX(0.9321);transform-origin:0 0;white-space:nowrap;">4,895,285</div>
<div id="t125" style="position:absolute;left:320.30px;top:900.53px;font-size:10px;line-height:20px;color:#7c7c7c;font-weight:normal;transform:scaleX(0.9321);transform-origin:0 0;white-space:nowrap;">499,702</div>
<div id="t126" style="position:absolute;left:320.30px;top:913.83px;font-size:10px;line-height:20px;color:#7c7c7c;font-weight:normal;transform:scaleX(0.9321);transform-origin:0 0;white-space:nowrap;">5,003,086</div>
<div id="t127" style="position:absolute;left:436.30px;top:900.53px;font-size:10px;line-height:20px;color:#7c7c7c;font-weight:normal;transform:scaleX(0.9321);transform-origin:0 0;white-space:nowrap;">965,702</div>
<div id="t128" style="position:absolute;left:436.30px;top:913.83px;font-size:10px;line-height:20px;color:#7c7c7c;font-weight:normal;transform:scaleX(0.9321);transform-origin:0 0;white-space:nowrap;">9,898,371</div>
<div id="t129" style="position:absolute;left:553.00px;top:900.53px;font-size:10px;line-height:20px;color:#7c7c7c;font-weight:normal;transform:scaleX(0.9321);transform-origin:0 0;white-space:nowrap;">23,932</div>
<div id="t130" style="position:absolute;left:553.00px;top:913.83px;font-size:10px;line-height:20px;color:#7c7c7c;font-weight:normal;transform:scaleX(0.9321);transform-origin:0 0;white-space:nowrap;">235,981</div>
<div id="t131" style="position:absolute;left:654.40px;top:900.53px;font-size:10px;line-height:20px;color:#777;font-weight:normal;transform:scaleX(0.9345);transform-origin:0 0;white-space:nowrap;"><a style="color:#e0643a">01-22-2012</a></div>
<div id="t132" style="position:absolute;left:654.40px;top:913.83px;font-size:10px;line-height:20px;color:#777;font-weight:normal;transform:scaleX(0.9345);transform-origin:0 0;white-space:nowrap;"><a style="color:#e0643a">10-07-2012</a></div>
<div id="t133" style="position:absolute;left:36.70px;top:949.76px;font-size:10.5px;line-height:20px;color:#e0643a;font-weight:bold;letter-spacing:-0.126px;white-space:nowrap;">IDX Scans:</div>
<div id="t134" style="position:absolute;left:36.70px;top:963.23px;font-size:10px;line-height:20px;color:#7c7c7c;font-weight:normal;transform:scaleX(0.9321);transform-origin:0 0;white-space:nowrap;">Rows Used:</div>
<div id="t135" style="position:absolute;left:203.60px;top:949.93px;font-size:10px;line-height:20px;color:#7c7c7c;font-weight:normal;transform:scaleX(0.9321);transform-origin:0 0;white-space:nowrap;">485,027</div>
<div id="t136" style="position:absolute;left:203.60px;top:963.23px;font-size:10px;line-height:20px;color:#7c7c7c;font-weight:normal;transform:scaleX(0.9321);transform-origin:0 0;white-space:nowrap;">713,542</div>
<div id="t137" style="position:absolute;left:320.30px;top:949.93px;font-size:10px;line-height:20px;color:#7c7c7c;font-weight:normal;transform:scaleX(0.9321);transform-origin:0 0;white-space:nowrap;">456,860</div>
<div id="t138" style="position:absolute;left:320.30px;top:963.23px;font-size:10px;line-height:20px;color:#7c7c7c;font-weight:normal;transform:scaleX(0.9321);transform-origin:0 0;white-space:nowrap;">684,002</div>
<div id="t139" style="position:absolute;left:436.30px;top:949.93px;font-size:10px;line-height:20px;color:#7c7c7c;font-weight:normal;transform:scaleX(0.9321);transform-origin:0 0;white-space:nowrap;">941,887</div>
<div id="t140" style="position:absolute;left:436.30px;top:963.23px;font-size:10px;line-height:20px;color:#7c7c7c;font-weight:normal;transform:scaleX(0.9321);transform-origin:0 0;white-space:nowrap;">1,397,544</div>
<div id="t141" style="position:absolute;left:553.00px;top:949.93px;font-size:10px;line-height:20px;color:#7c7c7c;font-weight:normal;transform:scaleX(0.9321);transform-origin:0 0;white-space:nowrap;">20,638</div>
<div id="t142" style="position:absolute;left:553.00px;top:963.23px;font-size:10px;line-height:20px;color:#7c7c7c;font-weight:normal;transform:scaleX(0.9321);transform-origin:0 0;white-space:nowrap;">27,490</div>
<div id="t143" style="position:absolute;left:654.40px;top:949.93px;font-size:10px;line-height:20px;color:#777;font-weight:normal;transform:scaleX(0.9345);transform-origin:0 0;white-space:nowrap;"><a style="color:#e0643a">01-10-2012</a></div>
<div id="t144" style="position:absolute;left:654.40px;top:963.23px;font-size:10px;line-height:20px;color:#777;font-weight:normal;transform:scaleX(0.9345);transform-origin:0 0;white-space:nowrap;"><a style="color:#e0643a">01-02-2012</a></div>
<div id="t145" style="position:absolute;right:24.60px;text-align:right;top:1028.06px;font-size:10.5px;line-height:20px;color:#ffffff;font-weight:bold;letter-spacing:-0.103px;white-space:nowrap;z-index:2;-webkit-text-stroke:0.4px #fff;">Script Peak Memory Usage: 4.000M</div>

<div id="footer"></div>
</div>
<div id="pb"></div>
</body></html>
